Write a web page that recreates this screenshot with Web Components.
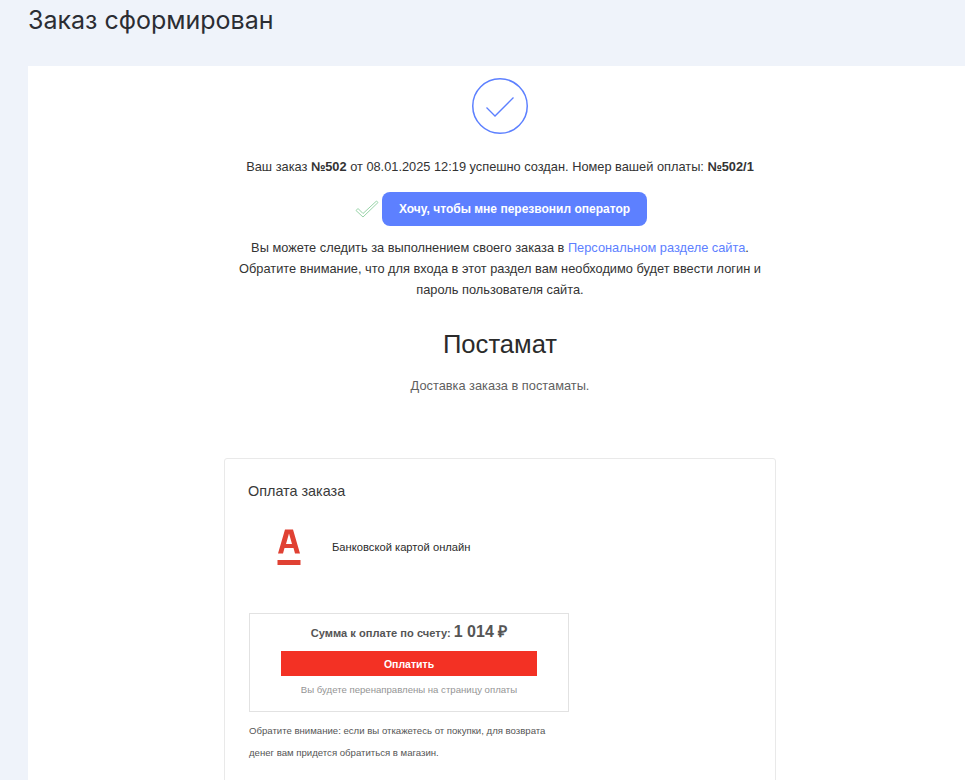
<!DOCTYPE html>
<html lang="ru">
<head>
<meta charset="utf-8">
<title>Заказ сформирован</title>
<style>
  html, body { margin: 0; height: 780px; overflow: hidden; background: #eff3fa; }
</style>
</head>
<body>
<order-page></order-page>
<script>
(function () {
  const confirmTemplate = document.createElement('template');
  confirmTemplate.innerHTML = `
    <style>
      :host {
        display: flex;
        flex-direction: column;
        align-items: center;
        font-family: "Liberation Sans", Arial, sans-serif;
        font-size: 12.8px;
        color: #333;
      }
      .mark { display: block; width: 56px; height: 56px; margin-top: 12px; }
      .line { margin-top: 23px; line-height: 20px; }
      .callback { display: flex; align-items: center; margin-top: 15px; margin-left: 2px; }
      .callback svg { display: block; width: 24px; height: 20px; margin-right: 3px; }
      .callback button {
        width: 265px;
        height: 34px;
        padding: 0;
        border: 0;
        border-radius: 8px;
        background: #5d80ff;
        color: #fff;
        font: bold 12px "Liberation Sans", Arial, sans-serif;
      }
      .note { margin-top: 11px; width: 530px; text-align: center; line-height: 21px; }
      a { color: #5d80ff; text-decoration: none; }
    </style>
    <svg class="mark" viewBox="0 0 56 56" fill="none" stroke="#5d80ff">
      <circle cx="28" cy="28" r="27.25" stroke-width="1.5"/>
      <path d="M14.5 29.5 L23 38 L41.5 19.5" stroke-width="1.3"/>
    </svg>
    <div class="line">Ваш заказ <b>№502</b> от 08.01.2025 12:19 успешно создан. Номер вашей оплаты: <b>№502/1</b></div>
    <div class="callback">
      <svg viewBox="0 0 24 20" fill="none" stroke="#98d4a8" stroke-width="1">
        <path d="M1 11.5 L3 9.5 L8 14.5 L21.5 2 L23 3.5 L8 18 Z"/>
      </svg>
      <button type="button">Хочу, чтобы мне перезвонил оператор</button>
    </div>
    <div class="note">Вы можете следить за выполнением своего заказа в <a href="#">Персональном разделе сайта</a>.<br>Обратите внимание, что для входа в этот раздел вам необходимо будет ввести логин и пароль пользователя сайта.</div>
  `;

  class OrderConfirm extends HTMLElement {
    constructor() {
      super();
      this.attachShadow({ mode: 'open' });
      this.shadowRoot.append(confirmTemplate.content.cloneNode(true));
    }
  }

  const deliveryTemplate = document.createElement('template');
  deliveryTemplate.innerHTML = `
    <style>
      :host {
        display: block;
        margin-top: 26px;
        text-align: center;
        font-family: "Liberation Sans", Arial, sans-serif;
      }
      .name { font-size: 25.6px; line-height: 36px; color: #2b2b2b; }
      .text { margin-top: 14px; font-size: 12.8px; line-height: 20px; color: #5f5f5f; }
    </style>
    <div class="name"><slot name="name"></slot></div>
    <div class="text"><slot name="text"></slot></div>
  `;

  class DeliveryInfo extends HTMLElement {
    constructor() {
      super();
      this.attachShadow({ mode: 'open' });
      this.shadowRoot.append(deliveryTemplate.content.cloneNode(true));
    }
  }

  const paymentTemplate = document.createElement('template');
  paymentTemplate.innerHTML = `
    <style>
      :host {
        display: block;
        box-sizing: border-box;
        width: 552px;
        margin: 62px auto 0;
        padding: 23px 24px 40px 23px;
        border: 1px solid #e9e9e9;
        border-radius: 3px;
        font-family: "Liberation Sans", Arial, sans-serif;
      }
      .title { font-size: 14.4px; line-height: 18px; color: #3a3a3a; }
      .method { display: flex; align-items: center; height: 66px; margin-top: 14px; padding-left: 29px; }
      .method svg { display: block; width: 24px; height: 36px; margin-right: 31px; }
      .method span { font-size: 11.2px; color: #2b2b2b; }
      .sum {
        box-sizing: border-box;
        width: 320px;
        height: 99px;
        margin: 33px 0 0 1px;
        border: 1px solid #e2e2e2;
        text-align: center;
      }
      .amount { margin-top: 6px; height: 23px; line-height: 23px; font-size: 11.1px; font-weight: bold; color: #555; }
      .amount b { font-size: 16px; }
      button {
        display: block;
        width: 256px;
        height: 25px;
        margin: 8px auto 0;
        padding: 0;
        border: 0;
        background: #f33124;
        color: #fff;
        font: bold 10.5px "Liberation Sans", Arial, sans-serif;
      }
      .hint { margin-top: 7px; font-size: 9.6px; line-height: 14px; color: #959595; }
      .warn { margin: 8px 0 0 1px; font-size: 9.6px; line-height: 21.6px; color: #555; }
    </style>
    <div class="title">Оплата заказа</div>
    <div class="method">
      <svg viewBox="0 0 24 36" fill="#e04133">
        <path d="M1 24.5 L8 0.5 H16 L23 24.5 H18 L16.5 19 H7.5 L6 24.5 Z M9 15 H15 L12 4.5 Z" fill-rule="evenodd"/>
        <rect x="0.5" y="31" width="23" height="5"/>
      </svg>
      <span>Банковской картой онлайн</span>
    </div>
    <div class="sum">
      <div class="amount">Сумма к оплате по счету: <b>1 014 ₽</b></div>
      <button type="button">Оплатить</button>
      <div class="hint">Вы будете перенаправлены на страницу оплаты</div>
    </div>
    <div class="warn">Обратите внимание: если вы откажетесь от покупки, для возврата<br>денег вам придется обратиться в магазин.</div>
  `;

  class PaymentCard extends HTMLElement {
    constructor() {
      super();
      this.attachShadow({ mode: 'open' });
      this.shadowRoot.append(paymentTemplate.content.cloneNode(true));
    }
  }

  const pageTemplate = document.createElement('template');
  pageTemplate.innerHTML = `
    <style>
      :host { display: block; width: 944px; padding-left: 28px; }
      h1 {
        margin: 0;
        height: 66px;
        font: 400 25px/40px Inter, "Noto Sans", sans-serif;
        color: #2b2d33;
      }
      .sheet { background: #fff; height: 714px; overflow: hidden; }
    </style>
    <h1>Заказ сформирован</h1>
    <div class="sheet">
      <order-confirm></order-confirm>
      <delivery-info>
        <span slot="name">Постамат</span>
        <span slot="text">Доставка заказа в постаматы.</span>
      </delivery-info>
      <payment-card></payment-card>
    </div>
  `;

  class OrderPage extends HTMLElement {
    constructor() {
      super();
      this.attachShadow({ mode: 'open' });
      this.shadowRoot.append(pageTemplate.content.cloneNode(true));
    }
  }

  customElements.define('order-confirm', OrderConfirm);
  customElements.define('delivery-info', DeliveryInfo);
  customElements.define('payment-card', PaymentCard);
  customElements.define('order-page', OrderPage);
})();
</script>
</body>
</html>
